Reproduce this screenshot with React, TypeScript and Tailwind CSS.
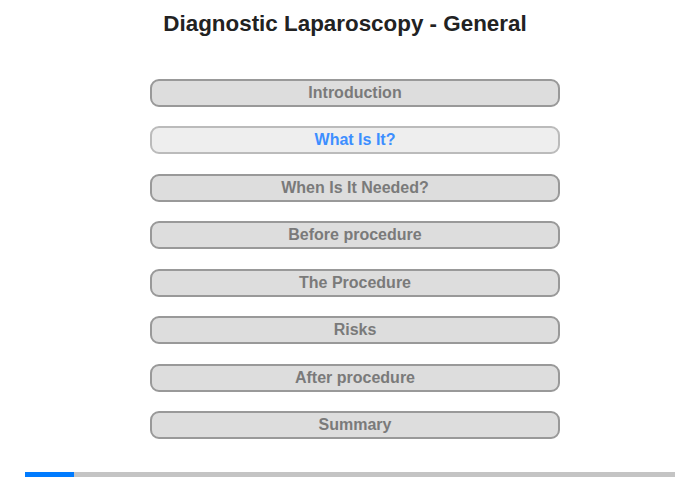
import React from "react";

const items = [
  "Introduction",
  "What Is It?",
  "When Is It Needed?",
  "Before procedure",
  "The Procedure",
  "Risks",
  "After procedure",
  "Summary",
];

export default function App() {
  return (
    <div
      className="w-[700px] h-[480px] bg-white flex flex-col"
      style={{ fontFamily: '"Liberation Sans", Arial, sans-serif' }}
    >
      <div className="pt-[12px] pr-[10px] text-center text-[22.4px] leading-6 font-bold text-[#222]">
        Diagnostic Laparoscopy - General
      </div>
      <div className="mt-[43px] ml-[150px] w-[410px] flex flex-col gap-[19.43px]">
        {items.map((t, i) => {
          const active = i === 1;
          return (
            <div
              key={t}
              className={
                active
                  ? "h-[28px] rounded-[9px] border-2 border-[#bbbbbb] bg-[#eeeeee] text-[#3d8eff] flex items-center justify-center text-[16px] font-bold"
                  : "h-[28px] rounded-[9px] border-2 border-[#999999] bg-[#dddddd] text-[#7a7a7a] flex items-center justify-center text-[16px] font-bold"
              }
            >
              {t}
            </div>
          );
        })}
      </div>
      <div className="mt-auto mb-[3px] ml-[25px] w-[650px] h-[5px] bg-[#c4c4c4] flex">
        <div className="w-[49px] h-full bg-[#007bff]" />
      </div>
    </div>
  );
}
